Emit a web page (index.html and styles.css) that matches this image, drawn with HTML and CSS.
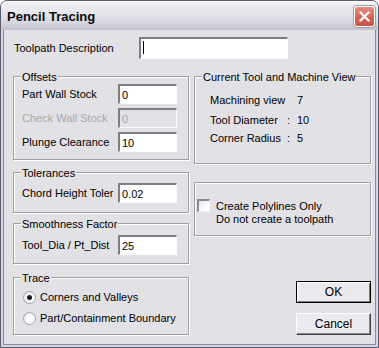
FILE: index.html
```html
<!DOCTYPE html>
<html>
<head>
    <title>Pencil Tracing</title>
    <link rel="stylesheet" href="styles.css">
</head>
<body>
<div class="window">
    <div class="titlebar">
        <span class="title">Pencil Tracing</span>
        <div class="close-btn">
            <svg width="11" height="11" viewBox="0 0 11 11">
                <path d="M1.5 1.5L9.5 9.5M9.5 1.5L1.5 9.5" stroke="#fff" stroke-width="2.4" stroke-linecap="round"></path>
            </svg>
        </div>
    </div>
    <div class="client">
        <div class="desc-row">
            <label class="desc-label">Toolpath Description</label>
            <div class="edit desc-edit"><span class="caret"></span></div>
        </div>
        <div class="columns">
            <div class="col-left">
                <div class="group offsets">
                    <span class="legend">Offsets</span>
                    <div class="field"><label>Part Wall Stock</label><input class="edit" type="text" value="0"></div>
                    <div class="field disabled"><label>Check Wall Stock</label><input class="edit" type="text" value="0" disabled></div>
                    <div class="field"><label>Plunge Clearance</label><input class="edit" type="text" value="10"></div>
                </div>
                <div class="group tolerances">
                    <span class="legend">Tolerances</span>
                    <div class="field"><label>Chord Height Toler</label><input class="edit" type="text" value="0.02"></div>
                </div>
                <div class="group smoothness">
                    <span class="legend">Smoothness Factor</span>
                    <div class="field"><label>Tool_Dia / Pt_Dist</label><input class="edit" type="text" value="25"></div>
                </div>
                <div class="group trace">
                    <span class="legend">Trace</span>
                    <div class="radio-row"><span class="radio checked"></span>Corners and Valleys</div>
                    <div class="radio-row"><span class="radio"></span>Part/Containment Boundary</div>
                </div>
            </div>
            <div class="col-right">
                <div class="group current">
                    <span class="legend">Current Tool and Machine View</span>
                    <div class="info-row first"><span>Machining view</span><span></span><span>7</span></div>
                    <div class="info-row second"><span>Tool Diameter</span><span>:</span><span>10</span></div>
                    <div class="info-row third"><span>Corner Radius</span><span>:</span><span>5</span></div>
                </div>
                <div class="group polylines">
                    <span class="checkbox"></span>
                    <div class="check-text">Create Polylines Only<br>Do not create a toolpath</div>
                </div>
                <button class="btn default">OK</button>
                <button class="btn cancel">Cancel</button>
            </div>
        </div>
    </div>
</div>
</body>
</html>
```

FILE: styles.css
```css
:root {
    --face: #e2e1e6;
    --frame-dark: #5c5c70;
    --frame-light: #d4d4de;
    --group-line: #9f9fa7;
    --disabled-text: #a7a7ab;
    --edit-dark: #7e7e86;
}
* {
    box-sizing: border-box;
}
body {
    margin: 0;
    font-family: "Liberation Sans", Arial, sans-serif;
    font-size: 11px;
    line-height: 13px;
    color: #000;
    background: #fff;
}
.window {
    width: 379px;
    height: 348px;
    border: 1px solid var(--frame-dark);
    border-radius: 7px 7px 0 0;
    background: var(--frame-light);
    display: flex;
    flex-direction: column;
    overflow: hidden;
}
.titlebar {
    flex: none;
    height: 29px;
    display: flex;
    align-items: center;
    justify-content: space-between;
    padding: 0 3px 0 6px;
    background: linear-gradient(#fdfdfe 0, #eeeef3 3px, #e4e4eb 45%, #d6d6e0 75%, #c2c2ce 100%);
}
.title {
    font-weight: bold;
    font-size: 13px;
    padding-top: 2px;
    color: #0a0a0a;
}
.close-btn {
    width: 21px;
    height: 21px;
    margin-top: 2px;
    border: 1px solid #fff;
    border-radius: 3px;
    background: linear-gradient(#e38f82, #cf6254 60%, #c8564a);
    box-shadow: 0 0 0 1px #a89ca4;
    display: flex;
    align-items: center;
    justify-content: center;
}
.client {
    flex: 1;
    margin: 0 2px 2px;
    border: 1px solid #8a8a9c;
    border-top: 0;
    background: var(--face);
    padding: 7px 0 0 9px;
}
.desc-row {
    display: flex;
    align-items: center;
    height: 22px;
}
.desc-label {
    margin-left: 1px;
    width: 125px;
}
.edit {
    background: #fff;
    border-style: solid;
    border-width: 2px 1px 1px 2px;
    border-color: var(--edit-dark) #fbfbfb #fbfbfb var(--edit-dark);
    font: inherit;
    color: #000;
    padding: 0 0 0 1px;
    margin: 0;
    outline: none;
}
.desc-edit {
    width: 149px;
    height: 22px;
    display: flex;
    align-items: center;
}
.caret {
    width: 1px;
    height: 13px;
    margin-left: 1px;
    margin-top: -2px;
    background: #000;
}
.columns {
    display: flex;
    gap: 5px;
    margin-top: 17px;
}
.col-left {
    width: 176px;
    display: flex;
    flex-direction: column;
}
.col-right {
    width: 177px;
    display: flex;
    flex-direction: column;
}
.group {
    position: relative;
    border: 1px solid var(--group-line);
    box-shadow: 1px 1px 0 #fff, inset 1px 1px 0 #fff;
}
.legend {
    position: absolute;
    top: -6px;
    left: 7px;
    padding: 0 1px;
    background: var(--face);
    white-space: nowrap;
}
.field {
    display: grid;
    grid-template-columns: 96px 59px;
    align-items: center;
    height: 20px;
}
.field .edit {
    width: 59px;
    height: 20px;
    padding-left: 2px;
}
.field.disabled label {
    color: var(--disabled-text);
}
.field .edit:disabled {
    background: var(--face);
    color: var(--disabled-text);
}
.offsets {
    height: 84px;
    padding: 7px 0 0 8px;
    display: flex;
    flex-direction: column;
    gap: 4px;
}
.tolerances {
    height: 41px;
    margin-top: 12px;
    padding: 10px 0 0 8px;
}
.smoothness {
    height: 41px;
    margin-top: 10px;
    padding: 11px 0 0 8px;
}
.trace {
    height: 58px;
    margin-top: 13px;
    padding: 9px 0 0 9px;
}
.radio-row {
    height: 21px;
    display: flex;
    align-items: center;
}
.radio {
    width: 13px;
    height: 13px;
    margin-right: 4px;
    border-radius: 50%;
    border: 1px solid #a2a2ac;
    background: radial-gradient(circle at 60% 60%, #ffffff 40%, #e6e6ea 75%, #c4c4cc);
    display: flex;
    align-items: center;
    justify-content: center;
}
.radio.checked::after {
    content: "";
    width: 5px;
    height: 5px;
    border-radius: 50%;
    background: #1a1a1a;
}
.current {
    height: 88px;
    padding: 17px 0 0 15px;
}
.info-row {
    display: grid;
    grid-template-columns: 77px 10px auto;
}
.info-row.second {
    margin-top: 7px;
}
.info-row.third {
    margin-top: 5px;
}
.polylines {
    height: 54px;
    margin-top: 18px;
    padding: 16px 0 0 2px;
    display: flex;
    align-items: flex-start;
}
.checkbox {
    flex: none;
    width: 13px;
    height: 13px;
    background: linear-gradient(135deg, #e6e6ea, #fff 70%);
    border-style: solid;
    border-width: 2px 1px 1px 2px;
    border-color: #8a8a92 #f4f4f6 #f4f4f6 #8a8a92;
}
.check-text {
    margin: 1px 0 0 6px;
}
.btn {
    align-self: flex-end;
    width: 75px;
    height: 22px;
    padding: 0;
    font: inherit;
    font-size: 12px;
    color: #000;
    background: #ebeaee;
    border-style: solid;
    border-width: 1px;
}
.btn.default {
    margin-top: 45px;
    border-color: #000;
    box-shadow: inset 1px 1px 0 #fff, inset -1px -1px 0 #7c7c84;
}
.btn.cancel {
    margin-top: 10px;
    border-color: #fff #404046 #404046 #fff;
    box-shadow: inset -1px -1px 0 #8a8a92;
}
```
